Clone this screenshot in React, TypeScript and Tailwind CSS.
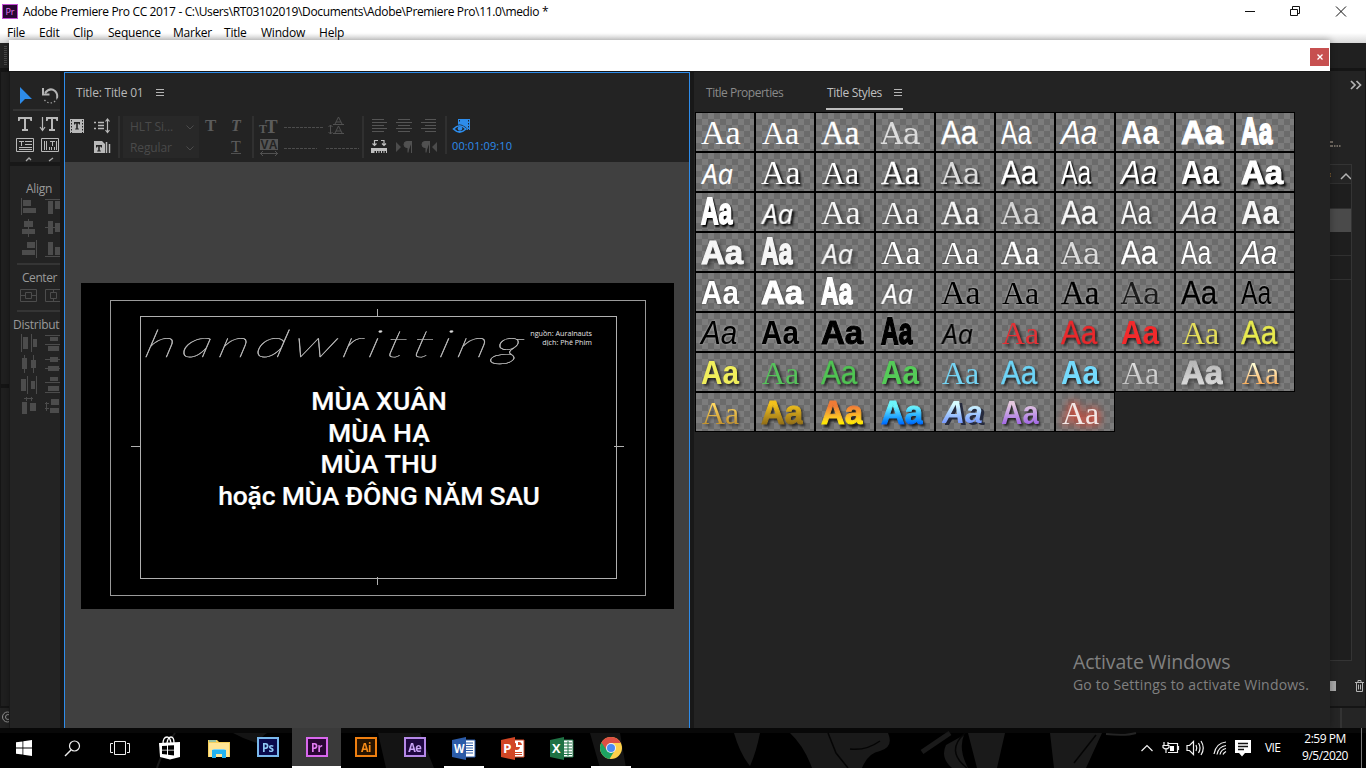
import React from "react";

type IcoProps = { box: string; w: number; h: number; className?: string; children: React.ReactNode };
const Ico = ({ box, w, h, className = "", children }: IcoProps) => (
  <svg viewBox={box} width={w} height={h} className={`block shrink-0 ${className}`}>
    {children}
  </svg>
);

const glyphs: Record<string, string> = {
  serif: "font-['Liberation_Serif',serif] text-[34px] -translate-x-px",
  serif2: "font-['Liberation_Serif',serif] text-[32px] translate-y-px",
  serif3: "font-['Liberation_Serif',serif] text-[33px] translate-y-px -translate-x-px [-webkit-text-stroke:0.3px_currentColor]",
  slab: "font-['DejaVu_Serif',serif] text-[30px] translate-y-px -translate-x-px opacity-75",
  sans: "font-['Liberation_Sans',sans-serif] text-[33px] scale-x-[0.9] -translate-x-px [-webkit-text-stroke:0.3px_currentColor]",
  narrow: "font-['Liberation_Sans',sans-serif] text-[33px] scale-x-[0.75] -translate-x-px",
  ital: "font-['Liberation_Sans',sans-serif] italic text-[33px] scale-x-[0.9] -translate-x-px",
  bold: "font-['Liberation_Sans',sans-serif] font-bold text-[33px] scale-x-[0.9] -translate-x-px",
  black: "font-['Liberation_Sans',sans-serif] font-bold text-[33px] -translate-x-px [-webkit-text-stroke:1px_currentColor]",
  impact: "font-['Liberation_Sans',sans-serif] font-bold text-[37px] scale-x-[0.66] -translate-x-px -translate-y-px [-webkit-text-stroke:1.8px_currentColor]",
  comic: "font-['Open_Sans',sans-serif] italic text-[28px] scale-x-[0.98] skew-x-[3deg] translate-y-px [-webkit-text-stroke:0.2px_currentColor]",
  blackItal: "font-['Liberation_Sans',sans-serif] font-bold italic text-[32px]",
};

const flat = "text-white";
const hard = "text-white [filter:drop-shadow(2px_2px_1px_#000)]";
const soft = "text-[#f6f6f6] [filter:drop-shadow(2px_2px_2px_#0009)]";
const edge = "text-white [filter:drop-shadow(0_0_1px_#0008)]";
const dark = "text-black [filter:drop-shadow(0_0_1px_#fff8)]";
const shade = "[filter:drop-shadow(2px_2px_1.5px_#000c)]";
const order = ["serif", "serif2", "serif3", "slab", "sans", "narrow", "ital", "bold", "black", "impact", "comic"];

const styles: [string, string][] = [
  ...[flat, hard, soft, edge, dark].flatMap((look) => order.map((g) => [g, look] as [string, string])),
  ["serif2", `text-[#e23236] ${shade}`],
  ["sans", `text-[#e8292c] ${shade}`],
  ["bold", `text-[#f22a2c] ${shade}`],
  ["serif2", `text-[#e3dc5a] ${shade}`],
  ["sans", `text-[#e7e94f] ${shade}`],
  ["bold", `text-[#f0ee5c] ${shade}`],
  ["serif2", `text-[#56c35b] ${shade}`],
  ["sans", `text-[#50c353] ${shade}`],
  ["bold", `text-[#55cb58] ${shade}`],
  ["serif2", `text-[#74d3f2] ${shade}`],
  ["sans", `text-[#6dd3f5] ${shade}`],
  ["bold", `text-[#74dafc] ${shade}`],
  ["serif2", "bg-gradient-to-b from-[#eee] to-[#b4b4b4] bg-clip-text text-transparent [filter:drop-shadow(0_0_2px_#5558)]"],
  ["black", "bg-gradient-to-b from-[#aaa] to-[#e4e4e4] bg-clip-text text-transparent [filter:blur(0.6px)_drop-shadow(2px_2px_2px_#0007)]"],
  ["serif2", "bg-gradient-to-b from-[#fffbd0] from-30% to-[#f6ac5a] to-80% bg-clip-text text-transparent [filter:drop-shadow(2px_2px_1px_#0009)]"],
  ["serif2", "bg-gradient-to-b from-[#ffd75e] from-30% to-[#a97618] bg-clip-text text-transparent [filter:drop-shadow(2px_2px_1px_#0007)]"],
  ["black", "bg-gradient-to-b from-[#f4c21b] from-30% to-[#8d6a17] to-85% bg-clip-text text-transparent [filter:drop-shadow(2px_2px_1px_#0009)]"],
  ["black", "bg-gradient-to-b from-[#ef7b35] from-35% to-[#ffe900] to-80% bg-clip-text text-transparent [filter:drop-shadow(2px_3px_1px_#000b)]"],
  ["black", "bg-gradient-to-b from-[#6cf5fb] from-35% to-[#075cff] to-85% bg-clip-text text-transparent [filter:drop-shadow(2px_2px_1px_#000b)]"],
  ["blackItal", "bg-gradient-to-b from-[#d6fcff] from-30% to-[#7596ff] to-80% bg-clip-text text-transparent [filter:drop-shadow(3px_2px_0px_#252a3d)]"],
  ["bold", "bg-gradient-to-b from-[#e4c8df] from-30% to-[#a66be6] to-80% bg-clip-text text-transparent [filter:drop-shadow(2px_2px_1px_#000b)]"],
  ["serif2", "text-[#f3e6e4] [filter:drop-shadow(0_0_4px_#ff3b25)_drop-shadow(0_0_4px_#e0452f99)]"],
];

const StyleCell = ({ glyph, look }: { glyph: string; look: string }) => (
  <div className="h-10 w-[60px] overflow-hidden border border-black bg-[conic-gradient(#6b6b6b_25%,#7c7c7c_0_50%,#6b6b6b_0_75%,#7c7c7c_0)] bg-[length:12px_12px] pl-[6px]">
    <span className={`inline-block h-[38px] origin-left leading-[39px] ${glyphs[glyph]} ${look}`}>Aa</span>
  </div>
);

const Burger = ({ className = "" }: { className?: string }) => (
  <span className={`flex h-[7px] w-[8px] flex-col justify-between ${className}`}>
    <i className="h-px bg-[#b4b4b4]" />
    <i className="h-px bg-[#b4b4b4]" />
    <i className="h-px bg-[#b4b4b4]" />
  </span>
);

const Serif = ({ x, y, size, children, fill, style = "normal", weight = "bold" }: { x: number; y: number; size: number; children: string; fill: string; style?: string; weight?: string }) => (
  <text x={x} y={y} fontSize={size} fill={fill} fontStyle={style} fontWeight={weight} fontFamily="Liberation Serif, serif">
    {children}
  </text>
);

const TopTools = () => (
  <div className="h-[90px] overflow-hidden bg-[#232323]">
    <Ico box="10 72 50 90" w={50} h={90}>
      <path d="M20 87 L32 99 L25 99 L20 104Z" fill="#2d8ceb" />
      <path d="M45 93q5-6 10-2q3 3 2 7M43 88v6.500h6.500" fill="none" stroke="#b4b4b4" strokeWidth="2" />
      <path d="M57 98a7 7 0 0 1-13 1" fill="none" stroke="#a0a0a0" strokeWidth="1.200" strokeDasharray="1.500 2" />
      <path d="M13 110h47" stroke="#343434" strokeWidth="2" />
      <path d="M18 117h14v4h-1.500l-.8-2H26v10h2v2h-6v-2h2v-10h-3.700l-.8 2H18zM46 117h12v4h-1.500l-.8-2H53v10h2v2h-6v-2h2v-10h-2.700l-.8 2H46z" fill="#b9b9b9" />
      <path d="M42.500 117v13M40 127l2.500 3.500l2.500-3.500" fill="none" stroke="#b9b9b9" strokeWidth="1.200" />
      <path d="M16.500 138.500h17v13h-17zM41.500 138.500h17v13h-17z" fill="none" stroke="#b9b9b9" />
      <path d="M19 141.500h5M21.500 141v5M25 141.500h7M25 144.500h7M19 147.500h13M19 149.500h13" stroke="#b9b9b9" />
      <path d="M44.500 141v9M46.500 141v9M49.500 147v3M51.500 147v3M54.500 147v3M56.500 141v9M50 141.500h5M52.500 141v5" stroke="#b9b9b9" />
      <path d="M26 161l3-3l2 2M49 161l4-3" fill="none" stroke="#aaa" strokeWidth="1.300" />
    </Ico>
  </div>
);

const Rule = ({ className = "" }: { className?: string }) => <div className={`ml-[7px] h-[2px] bg-[#353535] ${className}`} />;

const AlignTools = () => (
  <div className="flex min-h-0 flex-1 flex-col overflow-hidden bg-[#232323] font-['Open_Sans',sans-serif] text-[12px] text-[#9a9a9a]">
    <div className="mt-[14px] h-4 pl-4 leading-[17px] tracking-[-0.3px]">Align</div>
    <Ico box="10 196 50 66" w={50} h={66}>
      <g fill="#4c4c4c">
        <path d="M21 198h1v17h-1zM23 200h8v6h-8zM23 208h13v5H23zM45 199h15v1H45zM48 201h5v13h-5zM55 201h5v8h-5z" />
        <path d="M28 219h1v18h-1zM24 221h9v6h-9zM22 229h13v5H22zM45 227h15v1H45zM48 221h5v13h-5zM55 223h5v9h-5z" />
        <path d="M36 240h1v18h-1zM27 242h8v6h-8zM22 250h13v5H22zM45 256h15v1H45zM48 242h5v13h-5zM55 247h5v8h-5z" />
      </g>
    </Ico>
    <Rule className="mt-px" />
    <div className="mt-[4px] h-4 pl-3 leading-[17px] tracking-[-0.45px]">Center</div>
    <Ico box="10 286 50 22" w={50} h={22} className="mt-px">
      <g fill="none" stroke="#4c4c4c">
        <path d="M20.500 289.500h16v12h-16zM25.500 292.500h6v6h-6zM20 295.500h5M32 295.500h5M60 289.500h-14.500v12H60M50.500 292.500h6v6h-6zM53.500 289v3M53.500 299v3" />
      </g>
    </Ico>
    <Rule className="mt-[2px]" />
    <div className="mt-[4px] h-4 pl-[3px] leading-[17px] whitespace-nowrap tracking-[-0.25px]">Distribut</div>
    <Ico box="10 332 50 84" w={50} h={84}>
      <g fill="#4c4c4c">
        <path d="M21 334h1v18h-1zM23 337h5v12h-5zM31 334h1v18h-1zM33 339h4v8h-4zM45 335h15v1H45zM50 337h8v4h-8zM45 344h15v1H45zM48 346h11v5H48z" />
        <path d="M24 355h1v18h-1zM22 358h5v11h-5zM33 355h1v18h-1zM31 360h5v8h-5zM45 359h15v1H45zM50 357h8v5h-8zM45 368h15v1H45zM48 366h11v5H48z" />
        <path d="M21 379h5v12h-5zM27 376h1v18h-1zM31 381h4v8h-4zM36 376h1v18h-1zM50 377h8v4h-8zM45 382h15v1H45zM48 386h11v5H48zM45 392h15v1H45z" />
        <path d="M22 402h5v12h-5zM30 403h6v8h-6zM24 398h9v1h-9zM26 397h1v4h-1zM31 397h1v4h-1zM51 399h8v6h-8zM50 408h9v5h-9zM45 403h4v1h-4zM45 408h4v1h-4zM46 402h1v9h-1z" />
      </g>
    </Ico>
  </div>
);

const Sep = ({ className }: { className: string }) => <span className={`w-[2px] shrink-0 self-start bg-[#303030] ${className}`} />;
const Pick = ({ children }: { children: string }) => (
  <div className="flex h-[21px] items-center justify-between bg-[#282828] pt-px pr-[5px] pl-[7px]">
    <span>{children}</span>
    <Ico box="0 0 8 5" w={8} h={5}>
      <path d="M.5.500l3.500 3.500l3.500-3.500" fill="none" stroke="#4b4b4b" />
    </Ico>
  </div>
);

const Toolbar = () => (
  <div className="flex h-[46px] shrink-0 font-['Open_Sans',sans-serif] text-[12px] text-[#4a4a4a]">
    <Ico box="65 116 53 42" w={53} h={42}>
      <path d="M70 119h14v14H70zM94 141h8l3 3v9H94z" fill="#b9b9b9" />
      <path d="M71.500 120v13M82.500 120v13" stroke="#232323" strokeDasharray="1.500 1.500" />
      <path d="M74 122h6v2.500h-1l-.5-1h-.7v5h1v1h-3.600v-1h1v-5h-.7l-.5 1h-1zM96 145h6v2.500h-1l-.5-1h-.7v4h1v1h-3.600v-1h1v-4h-.7l-.5 1h-1z" fill="#232323" />
      <path d="M106.500 142v11M109.500 144v9" stroke="#b9b9b9" strokeWidth="1.500" />
      <path d="M94 122.500h2M94 128.500h2M98 122.500h6M98 125.500h6M98 128.500h6" stroke="#b9b9b9" strokeWidth="1.300" />
      <path d="M107.500 119v13M105.500 121.500l2-2.500l2 2.500M105.500 130l2 2.500l2-2.500" fill="none" stroke="#b9b9b9" strokeWidth="1.200" />
    </Ico>
    <Sep className="h-[42px]" />
    <div className="ml-[3px] w-[76px] shrink-0 tracking-[-0.1px]">
      <Pick>HLT Si...</Pick>
      <Pick>Regular</Pick>
    </div>
    <Ico box="199 116 53 42" w={53} h={42}>
      <Serif x={205} y={131} size={17} fill="#5c5c5c">T</Serif>
      <Serif x={231} y={131} size={16} fill="#5c5c5c" style="italic">T</Serif>
      <Serif x={231} y={152} size={16} fill="#5c5c5c" weight="normal">T</Serif>
      <path d="M231 153.500h10" stroke="#515151" />
    </Ico>
    <Sep className="h-[42px]" />
    <Ico box="254 116 108 42" w={108} h={42}>
      <Serif x={259} y={133} size={12} fill="#5c5c5c">T</Serif>
      <Serif x={265} y={133} size={19} fill="#5c5c5c">T</Serif>
      <path d="M260 139h18v11h-18z" fill="#555" />
      <text x="260.500" y="149" fontSize="12" fontWeight="bold" fill="#232323" fontFamily="Liberation Sans, sans-serif" textLength="17">VA</text>
      <path d="M260 153.500h18M263 151l-2.500 2.500l2.500 2.500M275 151l2.500 2.500l-2.500 2.500" fill="none" stroke="#515151" />
      <path d="M284 127.500h40M284 148.500h33M326 148.500h33" stroke="#4c4c4c" strokeDasharray="3 1" />
      <path d="M330.500 125v9M328.500 127l2-2l2 2M328.500 132l2 2l2-2M333 124.500h11M333 133.500h11M335 124l3.500-7l3.500 7M336 122h5M335 133l3.500-7l3.500 7M336 131h5" fill="none" stroke="#515151" />
    </Ico>
    <Sep className="h-[42px]" />
    <Ico box="364 116 81 42" w={81} h={42}>
      <path d="M372 119.500h12M372 122.500h15M372 125.500h12M372 128.500h15M372 131.500h12M398 119.500h12M396 122.500h16M398 125.500h12M396 128.500h16M398 131.500h12M425 119.500h11M421 122.500h15M425 125.500h11M421 128.500h15M425 131.500h11" stroke="#555" />
      <path d="M371 148h16v5h-1v-2h-1.500v2h-1v-2h-1.500v2h-1v-2h-1.500v2h-1v-2h-1.500v2h-1v-2h-1.500v2H371z" fill="#c0c0c0" />
      <path d="M378 140.500h-3.500v5M372.500 143.500l2 2l2-2M381 140.500h3v5M382 143.500l2 2l2-2" fill="none" stroke="#c0c0c0" strokeWidth="1.200" />
      <path d="M396 142l5 5l-5 5zM437 142l-5 5l5 5z" fill="#4c4c4c" />
      <path d="M412 141.500h-5a3 3 0 0 0 0 6h1v5M411.500 141v12M430 141.500h-5a3 3 0 0 0 0 6h1v5M429.500 141v12" stroke="#515151" fill="#515151" strokeWidth="1" />
    </Ico>
    <Sep className="h-[38px]" />
    <div className="ml-[5px]">
      <Ico box="452 116 20 20" w={20} h={20}>
        <path d="M458 119h12v11H458z" fill="#2d8ceb" />
        <path d="M459.500 120v3M468.500 120v10" stroke="#232323" strokeDasharray="1.500 1.500" />
        <path d="M452 129q7.500-9 15.500 0q-8 8-15.500 0z" fill="#232323" />
        <path d="M453.500 129q6-6.500 12.500 0q-6.500 6-12.500 0z" fill="#232323" stroke="#2d8ceb" strokeWidth="1.700" />
        <circle cx="460" cy="128.500" r="2.300" fill="#2d8ceb" />
      </Ico>
      <div className="mt-[2px] h-4 text-[11px] leading-4 tracking-[0.1px] text-[#2d8ceb]">00:01:09:10</div>
    </div>
  </div>
);

const TitleCanvas = () => (
  <div className="flex-1 bg-[#404040] pt-[121px] pl-4">
    <div className="relative h-[326px] w-[593px] bg-black font-[Roboto,'Open_Sans',sans-serif] text-white">
      <div className="absolute top-[17px] left-[29px] h-[296px] w-[536px] border border-[#9a9a9a]" />
      <div className="absolute top-[33px] left-[59px] h-[263px] w-[477px] border border-[#b0b0b0]" />
      <i className="absolute top-[26px] left-[296px] h-[7px] w-px bg-[#b0b0b0]" />
      <i className="absolute top-[294px] left-[296px] h-[8px] w-px bg-[#b0b0b0]" />
      <i className="absolute top-[163px] left-[50px] h-px w-[9px] bg-[#b0b0b0]" />
      <i className="absolute top-[163px] left-[533px] h-px w-[10px] bg-[#b0b0b0]" />
      <div className="absolute top-[35px] left-[65px] origin-left scale-x-[1.65] skew-x-[-8deg] font-[Lato,sans-serif] text-[38px] leading-[48px] font-thin tracking-[3.500px] whitespace-nowrap text-[#ddd] italic [-webkit-text-stroke:0.3px_#bbb]">
        handwritting
      </div>
      <div className="absolute top-[46px] right-[82px] text-right font-['Open_Sans',sans-serif] text-[7.200px] leading-[9px] whitespace-nowrap text-[#e4e4e4]">
        <div>nguồn: Auralnauts</div>
        <div>dịch: Phê Phim</div>
      </div>
      <div className="absolute top-[102px] left-0 w-[596px] text-center text-[26.500px] leading-[31.700px] font-medium tracking-[0.15px] [-webkit-text-stroke:0.2px_#fff]">
        <div>MÙA XUÂN</div>
        <div>MÙA HẠ</div>
        <div>MÙA THU</div>
        <div className="tracking-[-0.18px]">hoặc MÙA ĐÔNG NĂM SAU</div>
      </div>
    </div>
  </div>
);

const StylesPanel = () => (
  <div className="flex w-[636px] shrink-0 flex-col bg-[#232323]">
    <div className="flex h-[40px] shrink-0 font-['Open_Sans',sans-serif] text-[12px] leading-[17px]">
      <span className="mt-3 ml-3 w-[120px] tracking-[-0.48px] text-[#8a8a8a]">Title Properties</span>
      <span className="flex h-[38px] w-[77px] border-b-2 border-[#bdbdbd] pt-3 pl-px tracking-[-0.35px] text-[#c0c0c0]">
        Title Styles
        <Burger className="mt-[5px] mr-px ml-auto" />
      </span>
    </div>
    <div className="ml-px grid w-[600px] grid-cols-[repeat(10,60px)]">
      {styles.map(([glyph, look], i) => (
        <StyleCell key={i} glyph={glyph} look={look} />
      ))}
    </div>
    <div className="mt-auto mb-[33px] pl-[379px] font-['Open_Sans',sans-serif] whitespace-nowrap text-[#808080]">
      <div className="text-[19.500px] leading-6 tracking-[-0.17px]">Activate Windows</div>
      <div className="text-[14px] leading-[21px] tracking-[0.19px]">Go to Settings to activate Windows.</div>
    </div>
  </div>
);

const LeftStrip = () => (
  <div className="flex w-[9px] shrink-0 flex-col bg-[#151515]">
    <div className="h-[25px] bg-[#232323] pt-[3px] pl-[4px]">
      <div className="h-5 w-[3px] bg-[repeating-linear-gradient(#4a4a4a_0_1px,transparent_1px_2px)]" />
    </div>
    <div className="mt-[4px] ml-px h-[312px] bg-[#202020]" />
    <div className="mt-[4px] ml-px h-[318px] bg-[#202020]" />
    <div className="mt-[2px] flex-1 overflow-hidden bg-[#232323]">
      <Ico box="0 708 9 20" w={9} h={20}>
        <circle cx="7.500" cy="717" r="5" fill="none" stroke="#909090" />
        <circle cx="8" cy="717" r="2.500" fill="none" stroke="#909090" />
      </Ico>
    </div>
  </div>
);

const RightStrip = () => (
  <div className="flex w-9 shrink-0 flex-col bg-[#151515]">
    <div className="h-[25px] bg-[#202020]" />
    <div className="mt-[3px] flex h-[635px] w-[35px] flex-col bg-[#232323]">
      <Ico box="1330 71 35 93" w={35} h={93}>
        <path d="M1351 81l4 4l-4 4M1356.500 81l4 4l-4 4" fill="none" stroke="#b4b4b4" strokeWidth="1.700" />
        <path d="M1330 142h3M1330 146h3M1334 146h1.500M1336.500 146h1.500M1339 146h1.500" stroke="#8d8479" strokeWidth="1.300" />
      </Ico>
      <div className="h-[497px] w-[22px] border-y border-r border-[#343434] bg-[#1e1e1e]">
        <Ico box="1330 165 21 18" w={21} h={18} className="bg-[#242424]">
          <path d="M1341 179l5-5l5 5" fill="none" stroke="#b4b4b4" strokeWidth="1.500" />
          <path d="M1330.500 173v5" stroke="#7a5a30" strokeDasharray="1.500 1" />
        </Ico>
        <div className="h-[26px] border-y border-[#303030]" />
        <div className="h-[23px] bg-[#4a4a4a]" />
        <div className="h-[24px] border-b border-[#303030]" />
        <div className="h-[24px] border-b border-[#303030]" />
      </div>
      <div className="flex h-[45px] items-start pt-[19px]">
        <div className="mt-px h-[10px] w-[6px] bg-[#a8a8a8]" />
        <Ico box="0 0 9 12" w={9} h={12} className="ml-[19px]">
          <path d="M0 2.500h9M3 2V.500h3V2M1.500 3v8.500h6V3M3.500 4.500v5M5.500 4.500v5" fill="none" stroke="#b4b4b4" />
        </Ico>
      </div>
    </div>
    <div className="mt-[2px] flex-1 bg-[#252525]">
      <div className="ml-[10px] h-full w-[2px] bg-[#333]" />
    </div>
  </div>
);

const Adobe = ({ label, border, bg, color }: { label: string; border: string; bg: string; color: string }) => (
  <span className={`-mt-[2px] flex h-5 w-[22px] items-center justify-center border-2 font-['Open_Sans',sans-serif] text-[13px] leading-none font-bold tracking-[-0.5px] ${border} ${bg} ${color}`}>
    <span className="scale-x-[0.85]">{label}</span>
  </span>
);

const Office = ({ letter, fill, kind }: { letter: string; fill: string; kind: string }) => (
  <Ico box="0 0 24 23" w={24} h={23}>
    <path d="M12 3h11v17H12z" fill="#fff" stroke={fill} />
    {kind === "w" && <path d="M14 6h7M14 8.500h7M14 11h7M14 13.500h7M14 16h7" stroke={fill} />}
    {kind === "p" && <path d="M15 6a3.500 3.500 0 1 0 4 4h-4zM17 5v3h4a3.500 3.500 0 0 0-4-3zM14 15h7v1h-7zM14 17h7v1h-7z" fill={fill} />}
    {kind === "x" && <path d="M14 6h8M14 9h8M14 12h8M14 15h8M14 17.500h8M18 4v15" stroke={fill} />}
    <path d="M0 3L14 0v23L0 20z" fill={fill} />
    <text x="2" y="16" fontSize="12.500" fontWeight="bold" fill="#fff" fontFamily="Open Sans, sans-serif" textLength={kind === "w" ? 10.5 : 8.5} lengthAdjust="spacingAndGlyphs">
      {letter}
    </text>
  </Ico>
);

const Slot = ({ children, active = "" }: { children: React.ReactNode; active?: string }) => (
  <div className={`relative flex h-10 w-[49px] shrink-0 items-center justify-center ${active === "on" ? "bg-[#3a3a3a]" : ""}`}>
    {children}
    {active && <i className={`absolute bottom-0 h-[2px] bg-white ${active === "on" ? "w-[49px]" : "w-10"}`} />}
  </div>
);

const Taskbar = () => (
  <div className="relative flex h-10 shrink-0 bg-black">
    <svg viewBox="0 728 1366 40" width="1366" height="40" className="absolute inset-0">
      <path d="M0 728h1366v5H0z" fill="#080808" />
      <path d="M233 733h34q-12 8-2 12q-18-4-32-12zM378 733l8 35h48l-14-35zM590 733h30l6 35h-26z" fill="#141414" />
      <path d="M175 733q-12 16-18 35" fill="none" stroke="#181818" strokeWidth="2" />
      <path d="M734 733h26q-4 20-10 33q-10-12-16-33zM790 733h98q6 14-8 18q-12 2-18 17h-50q-8-22-22-35zM968 733h37l-8 35h-20zM946 745l18-10q-6 14 4 33h-16q-12-10-6-23zM1050 733h52l-16 35h-32z" fill="#1a1a1a" />
      <path d="M828 733l8 20l12 15M850 749q16 2 30-8M965 733q-20 18 2 35M1096 735l-22 28" fill="none" stroke="#050505" strokeWidth="1.500" />
      <path d="M922 752l28-19" stroke="#1a1a1a" strokeWidth="5" />
      <path d="M1106 734q20 2 30-1" stroke="#242424" strokeWidth="2" fill="none" />
    </svg>
    <div className="relative flex w-[145px] items-center">
      <Ico box="0 0 16 16" w={16} h={16} className="ml-4">
        <path d="M0 2.300l6.500-.9v6.200H0zM7.300 1.200L16 0v7.600H7.300zM0 8.400h6.500v6.200L0 13.700zM7.300 8.400H16V16l-8.700-1.200z" fill="#fff" />
      </Ico>
      <Ico box="0 0 17 17" w={17} h={17} className="ml-8">
        <circle cx="10.500" cy="6" r="5" fill="none" stroke="#eee" strokeWidth="1.200" />
        <path d="M7 10L1 16" stroke="#eee" strokeWidth="1.400" />
      </Ico>
      <Ico box="0 0 20 16" w={20} h={16} className="ml-[29px]">
        <path d="M4.500 1.500h11v13h-11zM3 3.500H.500v9H3M17 3.500h2.500v9H17" fill="none" stroke="#eee" />
      </Ico>
    </div>
    <div className="relative flex">
      <Slot>
        <Ico box="0 0 21 24" w={21} h={24}>
          <path d="M0 7l21-1v15l-10 2.500L1 21z" fill="#fff" />
          <path d="M4 8q0-7 4-7q3 0 4 6M8 7q1-6 4-6q3 0 3 6" fill="none" stroke="#fff" strokeWidth="1.300" />
          <path d="M3 10l5-.3v4H3zM9 9.600l6-.4v4.500H9zM3 14.500h5v4l-5-.5zM9 14.500h6v5l-6-.8z" fill="#000" />
        </Ico>
      </Slot>
      <Slot>
        <Ico box="0 0 22 19" w={22} h={19}>
          <path d="M0 1h9l2 2h11v15H0z" fill="#f6cf5c" />
          <path d="M1 4h20v14H1z" fill="#ffe596" />
          <path d="M1 1.500h7v1H1z" fill="#3cb7e8" />
          <path d="M4 19v-8h14v8h-4v-4H8v4z" fill="#23b3f0" />
          <path d="M4 11l2-1h10l2 1z" fill="#7ad4fa" />
        </Ico>
      </Slot>
      <Slot><Adobe label="Ps" border="border-[#79b8ec]" bg="bg-[#0a0a4c]" color="text-[#8fc8f4]" /></Slot>
      <Slot active="on"><Adobe label="Pr" border="border-[#d967ee]" bg="bg-[#2a0634]" color="text-[#e07bf0]" /></Slot>
      <Slot><Adobe label="Ai" border="border-[#ef7f10]" bg="bg-[#261300]" color="text-[#f58a17]" /></Slot>
      <Slot><Adobe label="Ae" border="border-[#b588e8]" bg="bg-[#1f0740]" color="text-[#c9a2f5]" /></Slot>
      <Slot active="open"><Office letter="W" fill="#2b5ba8" kind="w" /></Slot>
      <Slot><Office letter="P" fill="#d24625" kind="p" /></Slot>
      <Slot><Office letter="X" fill="#1f7244" kind="x" /></Slot>
      <Slot active="open">
        <Ico box="0 0 22 22" w={22} h={22}>
          <circle cx="11" cy="11" r="11" fill="#fdd04b" />
          <path d="M11 11L1.500 5.500A11 11 0 0 0 9.500 21.900L15 13z" fill="#1da462" />
          <path d="M11 6h9.800A11 11 0 0 0 1.500 5.500L6.500 13z" fill="#dd4f43" />
          <circle cx="11" cy="11" r="5" fill="#f1f1f1" />
          <circle cx="11" cy="11" r="4" fill="#4a8af4" />
        </Ico>
      </Slot>
    </div>
    <div className="relative ml-auto flex h-10 w-[226px] items-center font-['Open_Sans',sans-serif] text-[12px] text-white">
      <Ico box="1140 736 112 24" w={112} h={24}>
        <g fill="none" stroke="#f2f2f2" strokeWidth="1.200">
          <path d="M1141.500 751l5.500-5.500l5.500 5.500" />
          <path d="M1168 743.500h9.500v9H1168M1178.500 746v4M1164 742v3M1168 742v3M1163 745.500h6v2q-3 3-6 0zM1166 749v4" />
          <path d="M1187 745.500h2.500l4-4v13l-4-4H1187zM1196 745q1.500 3 0 6M1198.500 743q3 5 0 10M1201 741q4.500 7 0 14" />
          <path d="M1214 754q2-11 12-12M1217 754.500q1.500-8 9-9M1220 754.500q1-5 6-6M1223 754.500q1-2 3-3" />
        </g>
        <path d="M1170 746h4v5h-4zM1235 740h16v13h-6l-3 3.500l-3-3.500h-4z" fill="#fff" />
        <path d="M1238 743.500h10M1238 746.500h10M1238 749.500h6" stroke="#111" strokeWidth="1.300" />
      </Ico>
      <span className="ml-[13px] w-5 tracking-[-0.6px]">VIE</span>
      <span className="ml-[11px] w-[58px] text-center leading-[17px] tracking-[-0.5px] whitespace-nowrap">
        <span className="-mt-[3px] block">2:59 PM</span>
        <span className="block">9/5/2020</span>
      </span>
      <i className="ml-[7px] h-10 w-px bg-[#777]" />
    </div>
  </div>
);

const menus: [string, string][] = [
  ["File", "w-[32px]"], ["Edit", "w-[34px]"], ["Clip", "w-[35px]"], ["Sequence", "w-[65px]"],
  ["Marker", "w-[51px]"], ["Title", "w-[37px]"], ["Window", "w-[58px]"], ["Help", "w-[40px]"],
];

export default function App() {
  return (
    <div className="flex h-[768px] w-[1366px] flex-col overflow-hidden bg-white font-['Open_Sans',sans-serif] text-[12px] text-black">
      <header className="flex h-[23px] shrink-0 items-center pl-[2px]">
        <span className="flex h-[15px] w-4 items-center justify-center border border-[#c44fd4] bg-[#2a0634] text-[9px] leading-none text-[#e07bf0]">Pr</span>
        <span className="ml-[5px] tracking-[-0.36px] whitespace-nowrap">Adobe Premiere Pro CC 2017 - C:\Users\RT03102019\Documents\Adobe\Premiere Pro\11.0\medio *</span>
        <Ico box="1240 0 110 22" w={110} h={22} className="mr-4 ml-auto">
          <path d="M1245 10.500h10M1290.500 8.500h7v6h-7zM1292.500 8v-2.500h7v7H1298M1336 5.500l10 10M1346 5.500l-10 10" fill="none" stroke="#111" />
        </Ico>
      </header>
      <nav className="flex h-5 shrink-0 bg-gradient-to-b from-white from-50% to-[#d8d8d8] pl-[7px] leading-[20px] tracking-[-0.22px]">
        {menus.map(([label, w]) => (
          <span key={label} className={`shrink-0 ${w}`}>{label}</span>
        ))}
      </nav>
      <div className="flex h-[685px] shrink-0">
        <LeftStrip />
        <main className="relative -mt-[3px] flex h-[688px] w-[1321px] shrink-0 flex-col bg-[#181818] shadow-[0_0_7px_#0005]">
          <div className="flex h-[31px] shrink-0 justify-end bg-white pt-[8px] pr-px">
            <button className="flex h-[18px] w-[19px] items-center justify-center bg-[#c75050]">
              <Ico box="0 0 6 6" w={6} h={6}>
                <path d="M.5.500l5 5M5.500.500l-5 5" stroke="#fff" strokeWidth="1.300" />
              </Ico>
            </button>
          </div>
          <div className="flex min-h-0 flex-1 pt-px">
            <div className="ml-px flex w-[50px] shrink-0 flex-col gap-[4px]">
              <TopTools />
              <AlignTools />
            </div>
            <section className="ml-[4px] flex w-[626px] shrink-0 flex-col border border-b-0 border-[#2d8ceb] bg-[#232323]">
              <div className="flex h-[43px] shrink-0 pt-[11px] pl-[11px] leading-[17px] text-[#b8b8b8]">
                <span className="w-[80px] tracking-[-0.2px] whitespace-nowrap">Title: Title 01</span>
                <Burger className="mt-[5px]" />
              </div>
              <Toolbar />
              <TitleCanvas />
            </section>
            <div className="w-1 shrink-0" />
            <StylesPanel />
          </div>
        </main>
        <RightStrip />
      </div>
      <Taskbar />
    </div>
  );
}
